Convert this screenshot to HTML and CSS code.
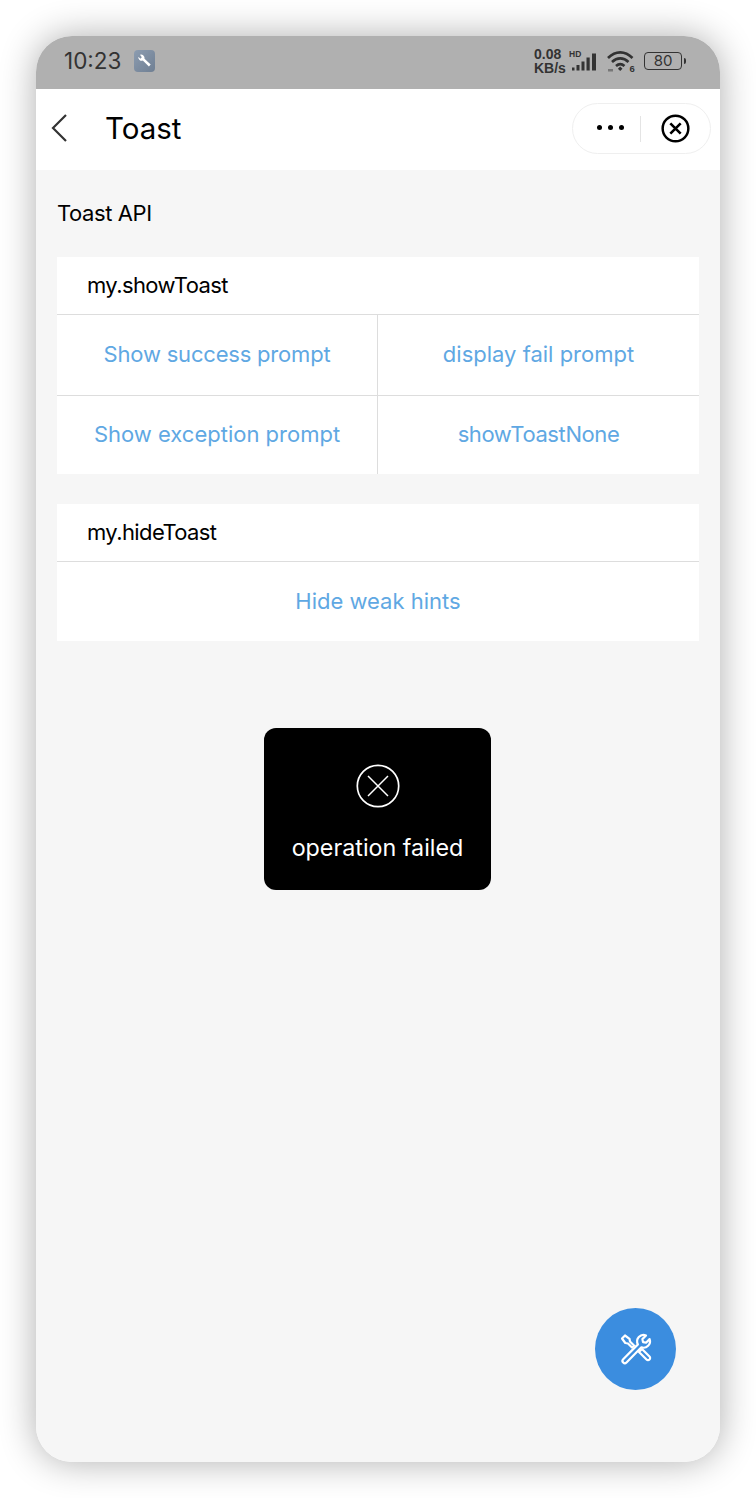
FILE: index.html
```html
<!DOCTYPE html>
<html lang="en">
<head>
<meta charset="utf-8">
<title>Toast</title>
<link rel="stylesheet" href="styles.css">
</head>
<body>
<div class="phone">
  <header class="status">
    <div class="status-left">
      <span class="time">10:23</span>
      <span class="app-badge">
        <svg width="20" height="20" viewBox="0 0 20 20"><path d="M5 3.800a3.500 3.500 0 0 1 4.500 4l6.200 5.800-1.800 1.900-6.100-5.900A3.500 3.500 0 0 1 3.300 5.800l2.100 1.900 1.400-1.400L5 3.800z" fill="#fff"/></svg>
      </span>
    </div>
    <div class="status-right">
      <span class="speed"><span>0.08</span><span>KB/s</span></span>
      <span class="signal">
        <svg width="32" height="24" viewBox="0 0 32 24"><text x="0" y="7.500" class="hd">HD</text><g fill="#333"><rect x="3" y="18.500" width="2.500" height="3"/><rect x="7.500" y="16" width="3" height="5.500"/><rect x="12.500" y="12.500" width="3" height="9"/><rect x="17.500" y="8.500" width="3.200" height="13"/><rect x="23" y="4.500" width="4" height="17"/></g></svg>
      </span>
      <span class="wifi">
        <svg width="29" height="24" viewBox="0 0 29 24"><g fill="none" stroke="#333" stroke-width="2.600"><path d="M1 9c7.500-7.500 17-7.500 24.500 0"/><path d="M5 13c5-4.800 11.500-4.800 16.500 0"/><path d="M9 17c2.800-2.500 5.700-2.500 8.500 0"/></g><path d="M13.200 17.500l2.300 2.300-2.300 2.300-2.300-2.300z" fill="#333"/><rect x="1" y="20" width="5" height="2.500" fill="#777"/><text x="22.500" y="23" class="six">6</text></svg>
      </span>
      <span class="battery"><span class="battery-body">80</span><span class="battery-tip"></span></span>
    </div>
  </header>
  <nav class="navbar">
    <svg class="back" width="18" height="30" viewBox="0 0 18 30"><path d="M16 2L3 15l13 13" fill="none" stroke="#333" stroke-width="2.200"/></svg>
    <h1 class="title">Toast</h1>
    <div class="capsule">
      <span class="more"><i></i><i></i><i></i></span>
      <span class="capsule-line"></span>
      <span class="close">
        <svg width="29" height="29" viewBox="0 0 28 28"><circle cx="14" cy="14" r="12.400" fill="none" stroke="#000" stroke-width="2.400"/><path d="M9 9l10 10M19 9L9 19" stroke="#000" stroke-width="2.500" fill="none"/></svg>
      </span>
    </div>
  </nav>
  <main class="content">
    <p class="page-title">Toast API</p>
    <section class="card">
      <div class="card-head">my.showToast</div>
      <div class="grid">
        <div class="cell r-line c-line tight">Show success prompt</div>
        <div class="cell c-line">display fail prompt</div>
        <div class="cell r-line tall">Show exception prompt</div>
        <div class="cell tall tighter">showToastNone</div>
      </div>
    </section>
    <section class="card">
      <div class="card-head">my.hideToast</div>
      <div class="cell single">Hide weak hints</div>
    </section>
  </main>
  <div class="toast">
    <svg width="44" height="44" viewBox="0 0 44 44"><circle cx="22" cy="22" r="20.700" fill="none" stroke="#fff" stroke-width="1.700"/><path d="M12 12l20 20M32 12L12 32" stroke="#fff" stroke-width="1.500" fill="none"/></svg>
    <span class="toast-text">operation failed</span>
  </div>
  <button class="fab" type="button" aria-label="Tools">
    <svg width="34" height="34" viewBox="0 0 34 34"><g fill="none" stroke="#fff" stroke-width="2.200" stroke-linejoin="round"><path d="M27 3.500l-3.600 3.600.6 3 3 .6 3.600-3.600a6.400 6.400 0 0 1-8.200 8.200L7.500 30.500a2.200 2.200 0 0 1-3.300-3.300l14.700-14.800a6.400 6.400 0 0 1 8.100-8.900z"/><path d="M3 6.500l3-3 4.500 3.300.5 2.700 4 4-2 2-4-4-2.700-.5z"/><path d="M20 20l3-3 7.500 7.500a2.100 2.100 0 0 1-3 3z"/></g></svg>
  </button>
</div>
</body>
</html>
```
FILE: styles.css
```css
* { box-sizing: border-box; }
html, body { margin: 0; height: 100%; background: #fff; }
body { padding: 36px; font-family: "Inter", "Noto Sans", sans-serif; }
.phone {
  position: relative;
  width: 684px;
  height: 1426px;
  border-radius: 36px;
  overflow: hidden;
  display: flex;
  flex-direction: column;
  background: #f6f6f6;
}
body::before {
  content: "";
  position: absolute;
  left: 36px; top: 36px;
  width: 684px; height: 1426px;
  border-radius: 36px;
  box-shadow: 0 0 36px rgba(0,0,0,.32);
}
.status {
  height: 53px;
  flex: none;
  background: #b0b0b0;
  display: flex;
  align-items: center;
  justify-content: space-between;
  padding: 0 34px 0 28px;
}
.status-left { display: flex; align-items: center; gap: 13px; padding-bottom: 4px; }
.time { font-size: 22.500px; color: #333; }
.app-badge {
  width: 21px; height: 22px; border-radius: 4px;
  background: linear-gradient(135deg, #8c9cb0, #6f7f93);
  display: flex; align-items: center; justify-content: center;
}
.status-right { display: flex; align-items: center; padding-bottom: 4px; }
.speed {
  display: flex; flex-direction: column;
  font-family: "Liberation Sans", sans-serif;
  font-size: 14px; line-height: 14px; font-weight: 700; color: #333;
  width: 35px;
}
.hd { font: 700 8.500px "Liberation Sans", sans-serif; fill: #333; }
.six { font: 700 9.500px "Liberation Sans", sans-serif; fill: #333; }
.signal { display: flex; }
.wifi { display: flex; margin-left: 6px; }
.battery { display: flex; align-items: center; margin-left: 8px; }
.battery-body {
  width: 38px; height: 18px;
  border: 1.500px solid #333; border-radius: 4px;
  font-size: 15px; line-height: 15px; color: #333; text-align: center;
}
.battery-tip { width: 2px; height: 6px; background: #333; margin-left: 2px; border-radius: 0 2px 2px 0; }

.navbar {
  height: 81px; flex: none;
  background: #fff;
  display: flex; align-items: center;
  padding: 0 9px 4px 14px;
}
.back { flex: none; margin-right: 37px; }
.title { margin: 0; flex: 1; font-size: 29.500px; font-weight: 400; color: #000; }
.capsule {
  width: 139px; height: 51px; margin-bottom: -2px;
  border: 1px solid #efefef; border-radius: 26px;
  display: flex; align-items: center;
}
.more { width: 67px; display: flex; justify-content: flex-end; gap: 6px; padding-right: 16px; margin-bottom: 2px; }
.more i { width: 5px; height: 5px; border-radius: 50%; background: #000; display: block; }
.capsule-line { width: 1px; height: 26px; background: #e4e4e4; }
.close { flex: 1; display: flex; justify-content: center; }

.content { flex: 1; padding: 0 21px; }
.page-title { margin: 0; padding: 30px 0 0; height: 87px; font-size: 22px; line-height: 27px; letter-spacing: -.4px; color: #000; }
.card { background: #fff; margin-bottom: 30px; }
.card-head {
  height: 58px; padding-left: 30px;
  font-size: 22px; line-height: 57px; letter-spacing: -.6px; color: #000;
  border-bottom: 1px solid #ddd;
}
.grid { display: grid; grid-template-columns: 321px 321px; }
.cell {
  display: flex; align-items: center; justify-content: center;
  height: 80px;
  font-size: 22px; color: #5fa8e3;
}
.cell.tall { height: 78px; padding-bottom: 2px; }
.c-line { height: 81px; border-bottom: 1px solid #ddd; padding-bottom: 2px; }
.r-line { border-right: 1px solid #ddd; }
.tight { letter-spacing: -.2px; }
.tighter { letter-spacing: -.4px; }
.single { height: 79px; padding-bottom: 1px; }

.toast {
  position: absolute;
  left: 228px; top: 692px;
  width: 227px; height: 162px;
  background: #000; border-radius: 12px;
  display: flex; flex-direction: column; align-items: center;
  padding-top: 36px;
}
.toast-text { margin-top: 25px; font-size: 23.300px; line-height: 30px; color: #fff; }
.fab {
  position: absolute;
  left: 559px; top: 1272px;
  width: 81px; height: 82px;
  border: 0; padding: 0; border-radius: 50%;
  background: #3b8ddf;
  display: flex; align-items: center; justify-content: center;
}
```
